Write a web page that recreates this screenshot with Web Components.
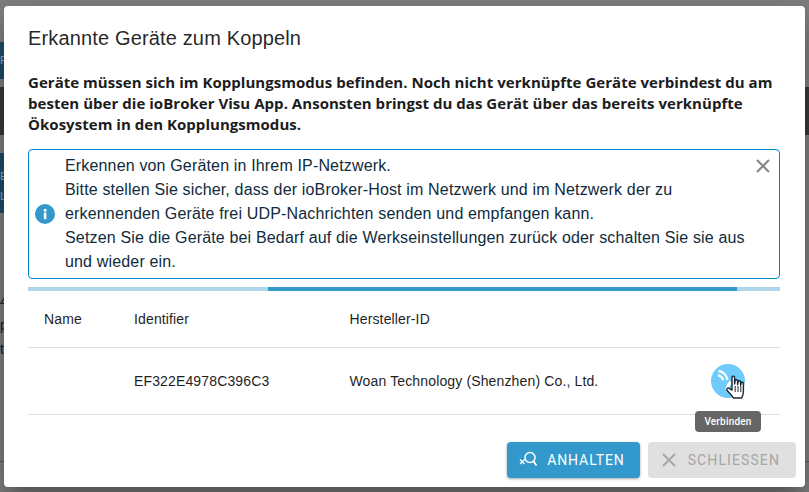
<!DOCTYPE html>
<html lang="de">
<head>
<meta charset="utf-8">
<title>Erkannte Geräte zum Koppeln</title>
<style>
  html, body { margin: 0; padding: 0; height: 100%; overflow: hidden; }
  body { font-family: "Liberation Sans", Arial, sans-serif; }
</style>
</head>
<body>
<pairing-backdrop>
  <pairing-dialog heading="Erkannte Geräte zum Koppeln">
    <p slot="intro">Geräte müssen sich im Kopplungsmodus befinden. Noch nicht verknüpfte Geräte verbindest du am besten über die ioBroker Visu App. Ansonsten bringst du das Gerät über das bereits verknüpfte Ökosystem in den Kopplungsmodus.</p>
    <info-alert slot="alert">
      Erkennen von Geräten in Ihrem IP-Netzwerk.<br>
      Bitte stellen Sie sicher, dass der ioBroker-Host im Netzwerk und im Netzwerk der zu erkennenden Geräte frei UDP-Nachrichten senden und empfangen kann.<br>
      Setzen Sie die Geräte bei Bedarf auf die Werkseinstellungen zurück oder schalten Sie sie aus und wieder ein.
    </info-alert>
    <scan-progress slot="progress"></scan-progress>
    <device-table slot="table"></device-table>
    <action-button slot="actions" icon="search-x" variant="primary">Anhalten</action-button>
    <action-button slot="actions" icon="close" variant="disabled">Schliessen</action-button>
  </pairing-dialog>
</pairing-backdrop>

<script>
class PairingBackdrop extends HTMLElement {
  constructor() {
    super();
    this.attachShadow({ mode: 'open' });
  }
  connectedCallback() {
    this.shadowRoot.innerHTML = `
      <style>
        :host {
          display: block;
          position: relative;
          width: 809px;
          height: 492px;
          overflow: hidden;
          background: #808080;
        }
        .patch { position: absolute; }
        .a { left: 0; top: 42px; width: 4px; height: 37px; background: #1e4f6b; }
        .b { left: 0; top: 87px; width: 809px; height: 48px; background: #3a3a3a; }
        .c { left: 0; top: 153px; width: 4px; height: 60px; background: #1e4f6b; }
        .d { left: 0; top: 461px; width: 809px; height: 1px; background: #5c5c5c; }
        .t { left: 0; font: 14px "Liberation Sans", sans-serif; color: #10203a; }
        .l { left: 0; font: 11px "Liberation Sans", sans-serif; color: #9fb2be; }
        .wrap { position: relative; display: flex; padding: 6px 4px 5px 4px; height: 481px; }
      </style>
      <div class="patch a"></div>
      <div class="patch b"></div>
      <div class="patch c"></div>
      <div class="patch d"></div>
      <span class="patch l" style="top:54px">F</span>
      <span class="patch l" style="top:170px">E</span>
      <span class="patch l" style="top:190px">L</span>
      <span class="patch t" style="top:293px">4</span>
      <span class="patch t" style="top:317px">p</span>
      <span class="patch t" style="top:341px">t</span>
      <div class="wrap"><slot></slot></div>
    `;
  }
}

class PairingDialog extends HTMLElement {
  constructor() {
    super();
    this.attachShadow({ mode: 'open' });
  }
  connectedCallback() {
    this.shadowRoot.innerHTML = `
      <style>
        :host {
          display: flex;
          flex-direction: column;
          width: 801px;
          height: 481px;
          box-sizing: border-box;
          background: #fff;
          border-radius: 4px;
          box-shadow: 0 11px 15px -7px rgba(0,0,0,.2), 0 24px 38px 3px rgba(0,0,0,.14), 0 9px 46px 8px rgba(0,0,0,.12);
          color: rgba(0,0,0,.87);
        }
        h2 {
          margin: 0;
          padding: 19px 24px 0;
          font: 400 20px/26px "Liberation Sans", Arial, sans-serif;
          letter-spacing: .15px;
        }
        .content { padding: 0 25px 0 24px; flex: 1; }
        ::slotted(p) {
          margin: 21px 0 14px;
          font: 700 15px/21px "Open Sans", sans-serif;
          color: #1c1c1c;
          letter-spacing: .035px;
        }
        .actions {
          display: flex;
          justify-content: flex-end;
          gap: 8px;
          padding: 0 9px 9px 0;
        }
      </style>
      <h2>${this.getAttribute('heading')}</h2>
      <div class="content">
        <slot name="intro"></slot>
        <slot name="alert"></slot>
        <slot name="progress"></slot>
        <slot name="table"></slot>
      </div>
      <div class="actions"><slot name="actions"></slot></div>
    `;
  }
}

class InfoAlert extends HTMLElement {
  constructor() {
    super();
    this.attachShadow({ mode: 'open' });
  }
  connectedCallback() {
    this.shadowRoot.innerHTML = `
      <style>
        :host {
          display: flex;
          align-items: center;
          box-sizing: border-box;
          height: 130px;
          border: 1px solid #0288d1;
          border-radius: 4px;
          font: 400 16px/24px "Liberation Sans", Arial, sans-serif;
          letter-spacing: .16px;
          color: #0f2b3d;
        }
        .icon { flex: none; width: 20px; height: 20px; margin: 0 10px 0 6px; }
        .text { flex: 1; }
        .close { flex: none; align-self: flex-start; width: 16px; height: 16px; margin: 8px 8px 0 8px; }
      </style>
      <svg class="icon" viewBox="0 0 20 20">
        <circle cx="10" cy="10" r="10" fill="#3399cc"/>
        <rect x="8.8" y="8.6" width="2.6" height="6.6" fill="#fff"/>
        <circle cx="10.1" cy="6.2" r="1.5" fill="#fff"/>
      </svg>
      <div class="text"><slot></slot></div>
      <svg class="close" viewBox="0 0 16 16">
        <path d="M2 2 L14 14 M14 2 L2 14" stroke="#858585" stroke-width="2" fill="none"/>
      </svg>
    `;
  }
}

class ScanProgress extends HTMLElement {
  constructor() {
    super();
    this.attachShadow({ mode: 'open' });
  }
  connectedCallback() {
    this.shadowRoot.innerHTML = `
      <style>
        :host {
          display: block;
          height: 4px;
          margin-top: 8px;
          background: #add6ea;
        }
        .bar { height: 4px; margin: 0 43px 0 240px; background: #3399cc; }
      </style>
      <div class="bar"></div>
    `;
  }
}

class DeviceTable extends HTMLElement {
  constructor() {
    super();
    this.attachShadow({ mode: 'open' });
  }
  connectedCallback() {
    this.shadowRoot.innerHTML = `
      <style>
        :host {
          display: block;
          font: 400 14px/20px "Liberation Sans", Arial, sans-serif;
          letter-spacing: .14px;
          color: #1f1f1f;
        }
        .row {
          display: grid;
          grid-template-columns: 90px 215.5px 1fr 104px;
          align-items: center;
          padding-left: 16px;
          border-bottom: 1px solid #e0e0e0;
        }
        .head { height: 56px; }
        .body { height: 66px; position: relative; }
        .connect {
          justify-self: center;
          position: relative;
          width: 34px;
          height: 34px;
          border-radius: 50%;
          background: #6fcbfb;
        }
        .connect svg.wave { position: absolute; left: 5px; top: 5px; width: 24px; height: 24px; }
        .connect svg.hand { position: absolute; left: 14px; top: 11px; width: 21px; height: 26px; }
        .tip {
          position: absolute;
          left: 667px;
          top: 63px;
          width: 66px;
          height: 21px;
          border-radius: 4px;
          background: #666;
          color: #fff;
          font: 500 10px/21px Roboto, sans-serif;
          letter-spacing: .2px;
          text-align: center;
          z-index: 2;
        }
      </style>
      <div class="row head"><span>Name</span><span>Identifier</span><span>Hersteller-ID</span><span></span></div>
      <div class="row body">
        <span></span>
        <span>EF322E4978C396C3</span>
        <span>Woan Technology (Shenzhen) Co., Ltd.</span>
        <div class="connect">
          <svg class="wave" viewBox="0 0 24 24" fill="none" stroke="#fff" stroke-width="2.3">
            <path d="M2.5 2 A10.5 10.5 0 0 1 11.5 11"/>
            <path d="M2 6.4 A6 6 0 0 1 7 11.4"/>
            <path d="M11 21 C11 18 12 15.5 15 13" stroke-width="3"/>
          </svg>
          <svg class="hand" viewBox="0 0 21 26">
            <path d="M7 2.2 C7 .7 9.6 .7 9.6 2.2 L9.6 9 L10.2 5.6 C10.5 4.3 12.6 4.5 12.6 6 L12.6 9.6 L13.2 6.6 C13.5 5.3 15.6 5.5 15.6 7 L15.6 10.2 L16.2 8 C16.5 6.8 18.4 7 18.4 8.4 L18.4 16 C18.4 20 17.6 21.5 16.6 23 L8.4 23 C7 20.4 4.8 18.4 2.2 15.6 C1 14.2 2.6 12.4 4.2 13.4 L7 15.2 Z" fill="#fff" stroke="#1d2733" stroke-width="1.4" stroke-linejoin="round"/>
            <path d="M10.2 11 L10.2 17 M13 11 L13 17 M15.8 11 L15.8 17" stroke="#1d2733" stroke-width="1"/>
          </svg>
        </div>
        <div class="tip">Verbinden</div>
      </div>
    `;
  }
}

class ActionButton extends HTMLElement {
  constructor() {
    super();
    this.attachShadow({ mode: 'open' });
  }
  connectedCallback() {
    const icons = {
      'search-x': `<circle cx="12" cy="7.5" r="5" fill="none" stroke="currentColor" stroke-width="1.5"/>
        <path d="M15.5 11.2 L18.5 15.5" stroke="currentColor" stroke-width="1.8" fill="none"/>
        <path d="M2 9.5 L6.5 14 M6.5 9.5 L2 14" stroke="currentColor" stroke-width="1.2" fill="none"/>`,
      close: `<path d="M4 4 L16 16 M16 4 L4 16" stroke="currentColor" stroke-width="2" fill="none"/>`
    };
    this.shadowRoot.innerHTML = `
      <style>
        :host {
          display: inline-flex;
          align-items: center;
          gap: 9px;
          box-sizing: border-box;
          height: 36px;
          padding: 0 16px 0 11px;
          border-radius: 4px;
          font: 400 14px/24px Roboto, sans-serif;
          letter-spacing: .9px;
          text-transform: uppercase;
        }
        :host([variant="primary"]) {
          padding-right: 15px;
          background: #3399cc;
          color: #fff;
          box-shadow: 0 1px 3px rgba(0,0,0,.35);
        }
        :host([variant="disabled"]) {
          letter-spacing: 1.1px;
          background: #e0e0e0;
          color: #a6a6a6;
        }
        svg { width: 20px; height: 20px; }
      </style>
      <svg viewBox="0 0 20 20">${icons[this.getAttribute('icon')] || ''}</svg>
      <slot></slot>
    `;
  }
}

customElements.define('pairing-backdrop', PairingBackdrop);
customElements.define('pairing-dialog', PairingDialog);
customElements.define('info-alert', InfoAlert);
customElements.define('scan-progress', ScanProgress);
customElements.define('device-table', DeviceTable);
customElements.define('action-button', ActionButton);
</script>
</body>
</html>
